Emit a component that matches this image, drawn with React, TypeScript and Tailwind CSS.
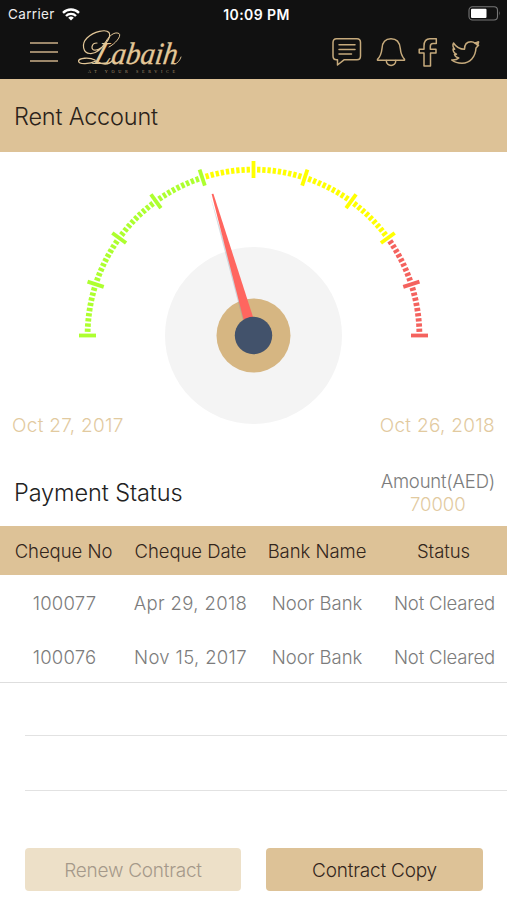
import React from 'react';

interface Cheque {
  no: string;
  date: string;
  bank: string;
  status: string;
}

const CHEQUES: Cheque[] = [
  { no: '100077', date: 'Apr 29, 2018', bank: 'Noor Bank', status: 'Not Cleared' },
  { no: '100076', date: 'Nov 15, 2017', bank: 'Noor Bank', status: 'Not Cleared' },
];

const CX = 253.5;
const CY = 183.5;

const tickColor = (i: number) => {
  if (i <= 40) return '#adff2f';
  return i <= 80 ? '#ffff00' : '#f4625e';
};

/** Half-circle gauge: 100 steps, a long tick every 10 steps. */
const Gauge: React.FC = () => (
  <svg width="507" height="280" viewBox="0 0 507 280" className="block">
    <circle cx={CX} cy={CY} r="88.5" fill="#f4f4f4" />
    <circle cx={CX} cy={CY} r="37" fill="#d6b682" />
    {Array.from({ length: 101 }, (_, i) => {
      const a = Math.PI - (i * Math.PI) / 100;
      const major = i % 10 === 0;
      const r1 = major ? 157.5 : 163;
      const r2 = major ? 174.5 : 168.8;
      return (
        <line
          key={i}
          x1={CX + r1 * Math.cos(a)}
          y1={CY - r1 * Math.sin(a)}
          x2={CX + r2 * Math.cos(a)}
          y2={CY - r2 * Math.sin(a)}
          stroke={tickColor(i)}
          strokeWidth={major ? 3.8 : 3.3}
        />
      );
    })}
    <path d="M210 43 L243 169 L248 168 Z" fill="#8896a5" opacity="0.35" />
    <path d="M211.6 42 L213.4 41.8 L258.5 182 L248 185 Z" fill="#ff665f" />
    <circle cx={CX} cy={CY} r="18.7" fill="#42526b" />
  </svg>
);

const Logo: React.FC = () => (
  <svg width="110" height="50" viewBox="0 0 110 50" fill="none" className="block">
    <g fill="#e3c798" fontFamily="'Liberation Serif', serif" fontStyle="italic">
      <text x="0" y="0" fontSize="32" textLength="18" lengthAdjust="spacingAndGlyphs" transform="translate(16 34.5) skewX(-18)">
        L
      </text>
      <text
        x="0"
        y="0"
        fontSize="31"
        fontWeight="500"
        textLength="66"
        lengthAdjust="spacingAndGlyphs"
        stroke="#e3c798"
        strokeWidth="0.3"
        transform="translate(34.5 35.3) skewX(-8)"
      >
        abaih
      </text>
    </g>
    <g stroke="#e3c798" strokeLinecap="round">
      <path d="M21 14 C15 14 14 22 20 21 C27 20 36 8 33 3.5 C30 0 18 2 11 9 C5 15 7 24 14 24.5 C21 25 26 19 29 14" strokeWidth="1.2" />
      <path d="M29 14 C32 8 38 2 43 4.5 C46 7 39 15 33 18" strokeWidth="1" />
      <path d="M19 31 C13 28 3 29 2.5 32 C3 36 14 35 20 32 C25 35 32 37 37 31" strokeWidth="1.3" />
      <path d="M99 35 C102 34 104 31 105 28" strokeWidth="0.9" />
    </g>
    <text x="12" y="44" fontSize="4.2" fontFamily="'Liberation Serif', serif" fill="#a8936f" textLength="87">
      AT YOUR SERVICE
    </text>
  </svg>
);

const HeaderIcons: React.FC = () => (
  <svg
    width="154"
    height="34"
    viewBox="0 0 154 34"
    fill="none"
    stroke="#c6aa7c"
    strokeWidth="1.5"
    strokeLinecap="round"
    strokeLinejoin="round"
    className="block"
  >
    <path d="M6.5 3.7 H27 Q30.5 3.7 30.5 7.5 V21 Q30.5 24.8 27 24.8 H14 L7.5 30 V24.8 H6.5 Q3 24.8 3 21 V7.5 Q3 3.7 6.5 3.7 Z" />
    <path d="M9 9.8 H25 M9 14.6 H25 M9 19 H21.5" />
    <path d="M47.5 25.3 V24.3 C51 21 51.5 18 52 13.5 C52.3 7.5 55.5 3.7 61 3.7 C66.5 3.7 69.7 7.5 70.3 13.5 C70.7 18 71.5 21 74.5 24.3 V25.3 Z" />
    <path d="M56.3 25.5 C56.3 32 65.8 32 65.8 25.5" />
    <path d="M94 31 V18 H89.2 V14.2 H94 V11 C94 6.5 96 3.7 100 3.7 H106.3 V8.5 H103 C101 8.5 100.3 9.5 100.3 11.5 V14.2 H106 V18 H100.5 V31 Z" />
    <path
      d="M123.5 8 C126.5 12.5 130 14.3 134.5 14.3 C134.5 9.5 137 6.8 141 6.8 C143 6.8 144.3 7.6 145.3 8.4 L148.6 7 L147.4 10 L148.6 10.2 L146 13 C145.5 22 140 28.2 132 28.2 C128 28.2 124.2 27 121.7 25 C125 25.2 127.3 24.5 128.8 23 C126.3 22.5 125 21 124.5 19.5 L126.5 19.2 C124 18 123 16.5 123 14 L124.7 14.2 C122.8 12.2 122.5 10 123.5 8 Z"
      strokeWidth="1.5"
    />
    <path d="M145 8 L148.5 7 L147.3 10 Z" fill="#c6aa7c" />
  </svg>
);

const StatusBar: React.FC = () => (
  <div className="grid h-7 grid-cols-3 items-center pl-2 pr-1.5 pt-px text-[13.5px] leading-none text-white">
    <div className="flex items-center gap-[7px]">
      <span className="tracking-[0.35px] text-[#eeeeee]">Carrier</span>
      <svg width="18" height="13" viewBox="0 0 18 13" fill="none" stroke="#ffffff" strokeWidth="2.4">
        <path d="M1 4.8 A11.5 11.5 0 0 1 17 4.8" />
        <path d="M4 8 A7 7 0 0 1 14 8" />
        <path d="M9 12.5 L6.2 9.8 A4 4 0 0 1 11.8 9.8 Z" fill="#ffffff" stroke="none" />
      </svg>
    </div>
    <span className="pl-1 text-center text-[14px] font-semibold tracking-[0.4px]">10:09 PM</span>
    <div className="-mt-0.5 flex justify-end">
      <svg width="33" height="15" viewBox="0 0 33 15">
        <rect x="1" y="0.8" width="28.5" height="13.2" rx="3.5" fill="none" stroke="#777777" strokeWidth="1.1" />
        <rect x="3" y="2.8" width="15.5" height="9.2" rx="1" fill="#ffffff" />
        <path d="M31 5 Q32.6 7.4 31 9.8 Z" fill="#777777" />
      </svg>
    </div>
  </div>
);

const App: React.FC = () => (
  <div className="flex h-[900px] w-[507px] flex-col overflow-hidden bg-white font-['Inter',sans-serif] font-light text-[#7c7c7c]">
    {/* Header */}
    <header className="h-[79px] flex-shrink-0 bg-[#111111] font-normal">
      <StatusBar />
      <div className="flex h-[51px] items-start pl-[30px]">
        <div className="mt-[14px] flex w-7 flex-col gap-[7px]">
          <div className="h-0.5 bg-[#9c876a]" />
          <div className="h-0.5 bg-[#9c876a]" />
          <div className="h-0.5 bg-[#9c876a]" />
        </div>
        <div className="ml-[18px] mt-px">
          <Logo />
        </div>
        <div className="ml-[144px] mt-[7px]">
          <HeaderIcons />
        </div>
      </div>
    </header>

    <div className="flex h-[73px] flex-shrink-0 items-center bg-[#ddc297] pl-3.5 pt-[3px]">
      <h1 className="text-[23.5px] tracking-[-0.2px] text-[#2b221a]">Rent Account</h1>
    </div>

    {/* Contract period */}
    <Gauge />
    <div className="-mt-[18px] flex h-6 flex-shrink-0 items-center justify-between px-3 text-[19px] tracking-[0.3px] text-[#e2ca9f]">
      <span>Oct 27, 2017</span>
      <span>Oct 26, 2018</span>
    </div>

    <div className="flex h-[88px] flex-shrink-0 justify-between pl-3.5 pr-3 pt-8">
      <h2 className="mt-[5px] text-[23.5px] leading-9 tracking-[-0.1px] text-[#222222]">Payment Status</h2>
      <div className="text-center text-[18.5px] leading-[23px]">
        <div className="tracking-[-0.2px]">Amount(AED)</div>
        <div className="text-[#e2ca9f]">70000</div>
      </div>
    </div>

    {/* Cheques */}
    <div className="grid h-[49px] flex-shrink-0 grid-cols-[127px_127px_126px_127px] items-center bg-[#ddc297] pt-0.5 text-center text-[18.5px] tracking-[-0.05px] text-[#33261c]">
      <span>Cheque No</span>
      <span>Cheque Date</span>
      <span>Bank Name</span>
      <span>Status</span>
    </div>
    <div className="h-[108px] flex-shrink-0 border-b border-[#dedede] pt-0.5">
      {CHEQUES.map((c) => (
        <div
          key={c.no}
          className="grid h-[54px] grid-cols-[127px_127px_126px_127px] items-center text-center text-[18.5px]"
        >
          <span className="pl-0.5 tracking-[0.2px]">{c.no}</span>
          <span className="tracking-[0.35px]">{c.date}</span>
          <span>{c.bank}</span>
          <span className="pl-0.5 tracking-[-0.15px]">{c.status}</span>
        </div>
      ))}
    </div>
    <div className="ml-[25px] h-[53px] flex-shrink-0 border-b border-[#e2e2e2]" />
    <div className="ml-[25px] h-[55px] flex-shrink-0 border-b border-[#e2e2e2]" />

    {/* Actions */}
    <div className="mt-[57px] flex gap-[25px] pl-[25px]">
      <button disabled className="h-[43px] w-[216px] rounded bg-[#ede0c8] pt-[3px] text-[19px] tracking-[-0.25px] text-[#a5998a]">
        Renew Contract
      </button>
      <button className="h-[43px] w-[217px] rounded bg-[#ddc297] pt-[3px] text-[19px] tracking-[-0.2px] text-[#33261c]">
        Contract Copy
      </button>
    </div>
  </div>
);

export default App;
